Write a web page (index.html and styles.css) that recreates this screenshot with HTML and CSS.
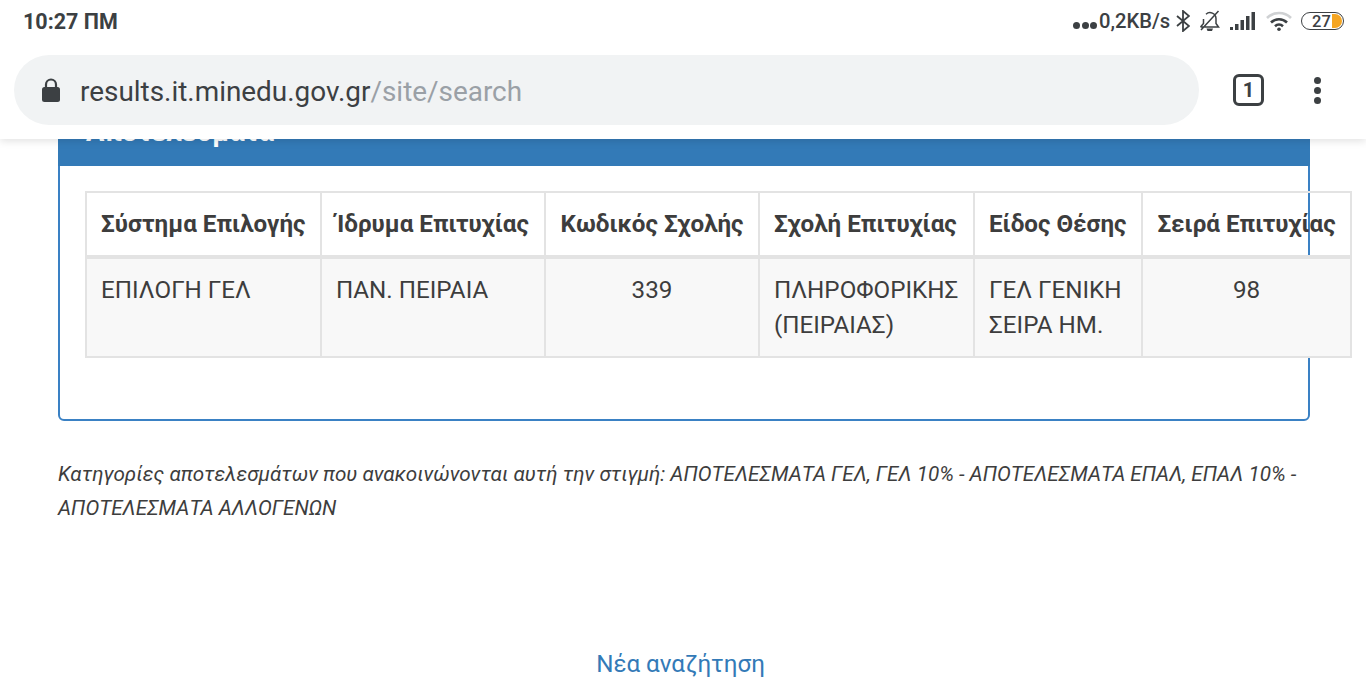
FILE: index.html
```html
<!DOCTYPE html>
<html lang="el">
<head>
<meta charset="utf-8">
<title>Αποτελέσματα</title>
<link rel="stylesheet" href="styles.css">
</head>
<body>
<header class="chrome">
  <div class="status">
    <span class="time">10:27 ΠΜ</span>
    <div class="status-right">
      <span class="dots"><i></i><i></i><i></i></span>
      <span class="speed">0,2KB/s</span>
      <svg class="ic-bt" width="14" height="22" viewBox="0 0 14 22"><path d="M1 6l12 10-6 5V1l6 5L1 16" fill="none" stroke="#3c4043" stroke-width="1.8"/></svg>
      <svg class="ic-bell" width="22" height="22" viewBox="0 0 22 22"><path d="M1.500 17h18l-2.500-3.500V8.500a6 6 0 0 0-10-4.300M4.500 9v4.500L1.500 17M19.500 1L2 20" fill="none" stroke="#3c4043" stroke-width="1.500"/><path d="M7.500 18.500h6.500l-1 2.500h-4.500z" fill="#3c4043"/></svg>
      <svg class="ic-signal" width="26" height="20" viewBox="0 0 26 20"><g fill="#3c4043"><rect x="0" y="16" width="3" height="3"/><rect x="5" y="13" width="3.500" height="6"/><rect x="10.500" y="9" width="3.500" height="10"/><rect x="16" y="5" width="3.500" height="14"/><rect x="21.500" y="1" width="3.500" height="18"/></g></svg>
      <svg class="ic-wifi" width="26" height="20" viewBox="0 0 26 20"><path d="M1 7a17 17 0 0 1 24 0" fill="none" stroke="#cfd1d3" stroke-width="2.600"/><path d="M5 11.500a11.500 11.500 0 0 1 16 0M9 15.200a6 6 0 0 1 8 0" fill="none" stroke="#3c4043" stroke-width="2.600"/><circle cx="13" cy="18.200" r="1.800" fill="#3c4043"/></svg>
      <span class="battery"><span class="batt-num">27</span><span class="batt-fill"></span></span>
    </div>
  </div>
  <div class="toolbar">
    <div class="omnibox">
      <svg class="ic-lock" width="18" height="24" viewBox="0 0 18 24"><path d="M4 10V6.500a5 5 0 0 1 10 0V10" fill="none" stroke="#3c4043" stroke-width="2.200"/><rect x="0" y="9" width="18" height="15" rx="2.500" fill="#3c4043"/></svg>
      <span class="url">results.it.minedu.gov.gr<span class="url-path">/site/search</span></span>
    </div>
    <span class="tabs">1</span>
    <span class="menu"><i></i><i></i><i></i></span>
  </div>
</header>
<main class="page">
  <section class="panel">
    <h3 class="panel-title">Αποτελέσματα</h3>
    <div class="panel-body">
      <table class="results">
        <colgroup>
          <col class="c1"><col class="c2"><col class="c3"><col class="c4"><col class="c5"><col class="c6">
        </colgroup>
        <thead>
          <tr>
            <th>Σύστημα Επιλογής</th>
            <th>Ίδρυμα Επιτυχίας</th>
            <th class="center">Κωδικός Σχολής</th>
            <th>Σχολή Επιτυχίας</th>
            <th>Είδος Θέσης</th>
            <th class="center">Σειρά Επιτυχίας</th>
          </tr>
        </thead>
        <tbody>
          <tr>
            <td>ΕΠΙΛΟΓΗ ΓΕΛ</td>
            <td>ΠΑΝ. ΠΕΙΡΑΙΑ</td>
            <td class="center">339</td>
            <td>ΠΛΗΡΟΦΟΡΙΚΗΣ (ΠΕΙΡΑΙΑΣ)</td>
            <td>ΓΕΛ ΓΕΝΙΚΗ ΣΕΙΡΑ ΗΜ.</td>
            <td class="center">98</td>
          </tr>
        </tbody>
      </table>
    </div>
  </section>
  <p class="note">Κατηγορίες αποτελεσμάτων που ανακοινώνονται αυτή την στιγμή: ΑΠΟΤΕΛΕΣΜΑΤΑ ΓΕΛ, ΓΕΛ 10% - ΑΠΟΤΕΛΕΣΜΑΤΑ ΕΠΑΛ, ΕΠΑΛ 10% - ΑΠΟΤΕΛΕΣΜΑΤΑ ΑΛΛΟΓΕΝΩΝ</p>
  <p class="again"><a href="#">Νέα αναζήτηση</a></p>
</main>
</body>
</html>
```
FILE: styles.css
```css
* { box-sizing: border-box; }
html, body { margin: 0; padding: 0; height: 683px; overflow: hidden; background: #fff; }
body { font-family: Roboto, sans-serif; color: #3d3d3d; }

.chrome {
  position: relative;
  z-index: 2;
  height: 139px;
  background: #fff;
  box-shadow: 0 2px 8px rgba(0, 0, 0, .12);
  color: #3c4043;
}
.status {
  height: 42px;
  padding: 0 22px 0 23px;
  display: flex;
  align-items: center;
  justify-content: space-between;
}
.time { font-size: 21.500px; font-weight: 700; }
.status-right { display: flex; align-items: center; }
.dots { display: flex; gap: 1.500px; margin-right: 2px; padding-top: 8px; }
.dots i { width: 7px; height: 7px; border-radius: 50%; background: #3c4043; }
.speed { font-size: 20.200px; font-weight: 500; width: 73px; }
.ic-bt { margin-left: 4px; }
.ic-bell { margin-left: 9px; }
.ic-signal { margin-left: 9px; }
.ic-wifi { margin-left: 10px; }
.battery {
  position: relative;
  margin-left: 9px;
  width: 43px;
  height: 18px;
  border: 1.500px solid #3c4043;
  border-radius: 9px;
  display: flex;
  align-items: center;
  justify-content: center;
  overflow: hidden;
}
.batt-num { font-size: 16.500px; font-weight: 500; margin-right: 2px; }
.batt-fill {
  position: absolute;
  right: 1px;
  top: 1px;
  bottom: 1px;
  width: 10px;
  background: #f5a623;
  border-radius: 0 7px 7px 0;
}

.toolbar {
  display: flex;
  align-items: center;
  height: 70px;
  margin-top: 13px;
  padding-left: 14px;
}
.omnibox {
  width: 1185px;
  height: 70px;
  border-radius: 35px;
  background: #f1f3f4;
  display: flex;
  align-items: center;
  padding-left: 28px;
}
.ic-lock { margin-right: 20px; }
.url { font-size: 27.900px; padding-top: 2px; color: #3c4043; }
.url-path { color: #9aa0a6; }
.tabs {
  margin-left: 34px;
  width: 31px;
  height: 32px;
  border: 3.500px solid #3c4043;
  border-radius: 6px;
  display: flex;
  align-items: center;
  justify-content: center;
  font-size: 20px;
  font-weight: 700;
}
.menu {
  margin-left: 50px;
  display: flex;
  flex-direction: column;
  gap: 3px;
}
.menu i { width: 7px; height: 7px; border-radius: 50%; background: #3c4043; }

.page { padding: 0 56px 0 58px; }
.panel {
  margin-top: -30px;
  border: 2px solid #3a81c4;
  border-radius: 6px;
  height: 312px;
}
.panel-title {
  margin: -2px -2px 0;
  height: 57px;
  padding: 7px 28px 0;
  background: #337ab7;
  color: #fff;
  font-size: 27.300px;
  font-weight: 700;
  line-height: 33px;
}
.panel-body { padding: 25px 0 0 25px; }
.results {
  table-layout: fixed;
  width: 1265px;
  border-collapse: collapse;
  font-size: 24.200px;
  line-height: 35px;
}
.c1 { width: 235px; }
.c2 { width: 224px; }
.c3 { width: 214px; }
.c4 { width: 215px; }
.c5 { width: 168px; }
.c6 { width: 209px; }
.results th, .results td {
  border: 2px solid #e3e3e3;
  padding: 14px;
  text-align: left;
  vertical-align: top;
}
.results th { border-bottom-width: 4px; padding-bottom: 13px; font-weight: 700; white-space: nowrap; }
.results td { background: #f8f8f8; padding-bottom: 13px; }
.results .center { text-align: center; }

.note {
  margin: 36px 0 0;
  font-size: 20.700px;
  font-style: italic;
  line-height: 34px;
}
.again { margin: 122px 7px 0 0; text-align: center; font-size: 24.200px; line-height: 34px; }
.again a { color: #337ab7; text-decoration: none; }
```
